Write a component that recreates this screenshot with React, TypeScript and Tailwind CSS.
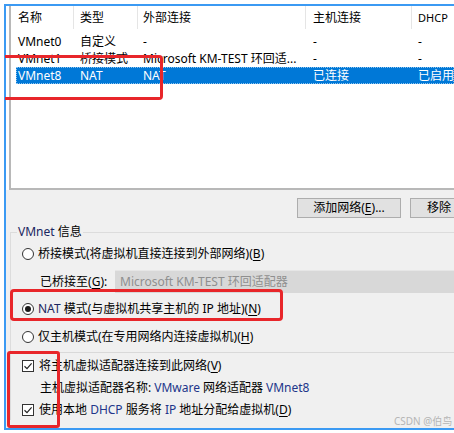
import React from "react";

const rows = [
  { name: "VMnet0", type: "自定义", ext: "-", host: "-", dhcp: "-" },
  { name: "VMnet1", type: "桥接模式", ext: "Microsoft KM-TEST 环回适...", host: "-", dhcp: "-" },
  { name: "VMnet8", type: "NAT", ext: "NAT", host: "已连接", dhcp: "已启用", selected: true },
];

function Key({ c }: { c: string }) {
  return (
    <>
      (<span className="underline underline-offset-2">{c}</span>)
    </>
  );
}

function Radio({ checked }: { checked?: boolean }) {
  return (
    <span className="flex h-[12px] w-[12px] shrink-0 items-center justify-center rounded-full border border-[#333333] bg-white">
      {checked && <span className="h-[6px] w-[6px] rounded-full bg-[#1a1a1a]" />}
    </span>
  );
}

function Check() {
  return (
    <span className="flex h-[12px] w-[12px] shrink-0 items-center justify-center border border-[#333333] bg-white">
      <svg width="10" height="10" viewBox="0 0 10 10">
        <path d="M1.5 5.2 L4 7.6 L8.6 2.4" fill="none" stroke="#222222" strokeWidth="1.2" />
      </svg>
    </span>
  );
}

export default function App() {
  return (
    <div className="relative h-[433px] w-[454px] overflow-hidden bg-white text-[12px] leading-[16px] text-black font-['Noto_Sans','Noto_Sans_CJK_SC',sans-serif]">
      <div className="ml-[4px] mt-[4px] flex h-[426px] flex-col border-b-2 border-l-2 border-t-2 border-[#3b9af3]">
        {/* network list */}
        <div className="h-[184px] bg-white pl-[3px]">
          <div className="h-full border-b-2 border-l-2 border-[#b8b8b8]">
            <div className="flex h-[23px]">
              <div className="flex w-[63px] items-center border-r border-[#e5e5e5] pl-[7px]">名称</div>
              <div className="flex w-[64px] items-center border-r border-[#e5e5e5] pl-[6px]">类型</div>
              <div className="flex w-[168px] items-center border-r border-[#e5e5e5] pl-[5px]">外部连接</div>
              <div className="flex w-[106px] items-center border-r border-[#e5e5e5] pl-[7px]">主机连接</div>
              <div className="flex flex-1 items-center pl-[6px] text-[11px]">DHCP</div>
            </div>
            <div className="ml-[5px] mt-[4px]">
              {rows.map((r) => (
                <div
                  key={r.name}
                  className={
                    r.selected
                      ? "grid h-[17px] grid-cols-[64px_63px_170px_105px_1fr] items-center whitespace-nowrap bg-[#0078d7] text-white outline-1 -outline-offset-1 outline-dotted outline-[#8cc4f0]"
                      : "grid h-[17px] grid-cols-[64px_63px_170px_105px_1fr] items-center whitespace-nowrap"
                  }
                >
                  <span className="pl-[2px]">{r.name}</span>
                  <span>{r.type}</span>
                  <span className="overflow-hidden">{r.ext}</span>
                  <span>{r.host}</span>
                  <span>{r.dhcp}</span>
                </div>
              ))}
            </div>
          </div>
        </div>

        {/* lower panel */}
        <div className="flex-1 bg-[#f0f0f0] pt-[8px]">
          <div className="flex gap-[9px] pl-[291px] whitespace-nowrap">
            <button className="flex h-[20px] w-[104px] shrink-0 items-center justify-center border border-[#adadad] bg-[#e1e1e1]">
              添加网络<Key c="E" />...
            </button>
            <button className="flex h-[20px] w-[58px] shrink-0 items-center justify-center border border-[#adadad] bg-[#e1e1e1]">
              移除
            </button>
          </div>

          <fieldset className="ml-[4px] mt-[6px] border border-b-0 border-r-0 border-[#dcdcdc] pl-[6px] pt-[4px] whitespace-nowrap">
            <legend className="px-[1px] leading-[16px]">
              <span className="text-[#1b2660]">VMnet</span> 信息
            </legend>
            <div className="ml-[5px] flex h-[20px] items-center gap-[4px]">
              <Radio />
              <span>
                桥接模式(将虚拟机直接连接到外部网络)<Key c="B" />
              </span>
            </div>
            <div className="mt-[6px] flex h-[23px] items-center">
              <span className="ml-[23px] w-[75px] shrink-0">
                已桥接至<Key c="G" />:
              </span>
              <div className="flex h-full flex-1 items-center border-t border-[#e6e6e6] bg-[#d8d8d8] pl-[5px] text-[#8f8f8f]">
                Microsoft KM-TEST 环回适配器
              </div>
            </div>
            <div className="ml-[5px] mt-[6px] flex h-[20px] items-center gap-[4px]">
              <Radio checked />
              <span>
                <span className="text-[#1b2660]">NAT</span> 模式(与虚拟机共享主机的 IP 地址)<Key c="N" />
              </span>
            </div>
            <div className="ml-[5px] mt-[8px] flex h-[20px] items-center gap-[4px]">
              <Radio />
              <span>
                仅主机模式(在专用网络内连接虚拟机)<Key c="H" />
              </span>
            </div>
            <div className="mt-[5px] h-px bg-[#d9d9d9]" />
            <div className="ml-[5px] mt-[3px] flex h-[20px] items-center gap-[5px]">
              <Check />
              <span>
                将主机虚拟适配器连接到此网络<Key c="V" />
              </span>
            </div>
            <div className="ml-[23px] mt-[2px] flex h-[20px] items-center">
              主机虚拟适配器名称: <span className="mx-[3px] text-[#22358a]">VMware</span> 网络适配器{" "}
              <span className="ml-[3px] text-[#22358a]">VMnet8</span>
            </div>
            <div className="ml-[5px] mt-[2px] flex h-[20px] items-center gap-[5px]">
              <Check />
              <span>
                使用本地 <span className="text-[#22358a]">DHCP</span> 服务将 <span className="text-[#22358a]">IP</span>{" "}
                地址分配给虚拟机<Key c="D" />
              </span>
            </div>
          </fieldset>
        </div>
      </div>

      {/* red annotation boxes */}
      <div className="absolute left-[5px] top-[55px] h-[45px] w-[158px] rounded-r-[4px] border-[3px] border-l-0 border-[#e8262a]" />
      <div className="absolute left-[10px] top-[289px] h-[32px] w-[273px] rounded-[4px] border-[3px] border-[#e8262a]" />
      <div className="absolute left-[7px] top-[351px] h-[77px] w-[53px] rounded-[3px] border-[3px] border-[#e8262a]" />

      <div className="absolute left-[394px] top-[414px] text-[10px] leading-[14px] text-[#b5b5b5]">CSDN @伯鸟</div>
    </div>
  );
}
